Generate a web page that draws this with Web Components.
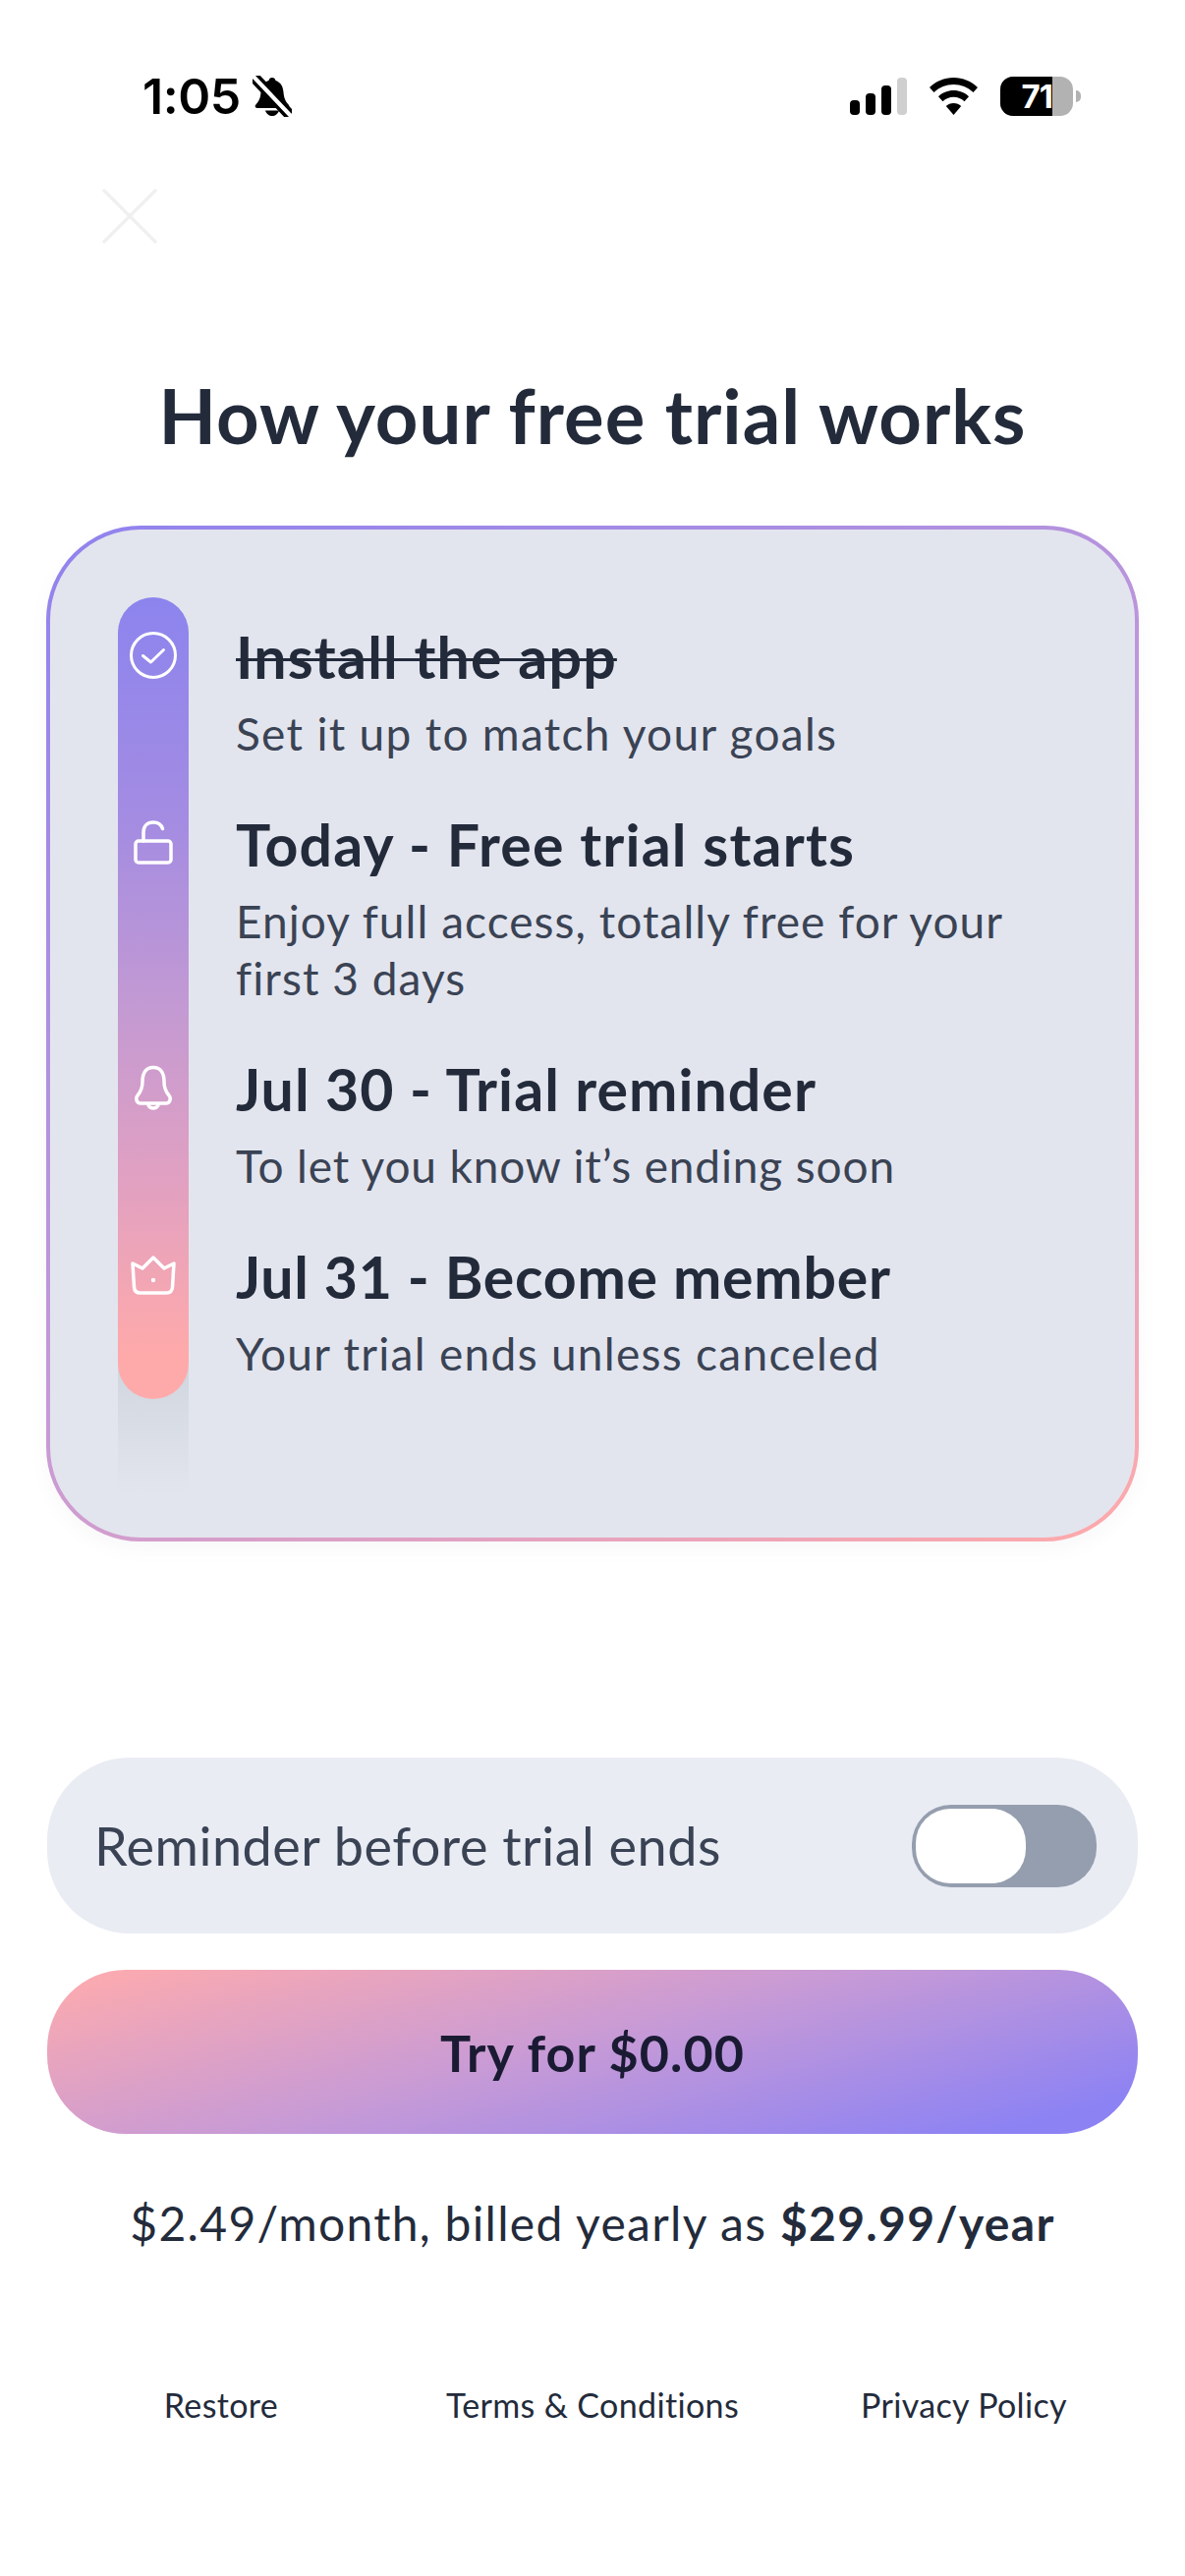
<!DOCTYPE html>
<html lang="en">
<head>
<meta charset="utf-8">
<title>How your free trial works</title>
<style>
  html, body { margin: 0; background: #fff; }
  body { font-family: "Lato", "Noto Sans", sans-serif; color: #232B3B; }
</style>
</head>
<body>
<trial-screen>
  <status-bar slot="status"></status-bar>
  <close-button slot="close"></close-button>
  <span slot="title">How your free trial works</span>
  <trial-timeline slot="card">
    <timeline-row icon="check" done style="--sub-track: 1.3px">
      <span slot="heading">Install the app</span>
      Set it up to match your goals
    </timeline-row>
    <timeline-row icon="lock">
      <span slot="heading">Today - Free trial starts</span>
      Enjoy full access, totally free for your<br>first 3 days
    </timeline-row>
    <timeline-row icon="bell" style="--head-track: 1.05px; --sub-track: 0.85px">
      <span slot="heading">Jul 30 - Trial reminder</span>
      To let you know it’s ending soon
    </timeline-row>
    <timeline-row icon="crown" style="--head-track: 0.75px; --sub-track: 1.3px">
      <span slot="heading">Jul 31 - Become member</span>
      Your trial ends unless canceled
    </timeline-row>
  </trial-timeline>
  <reminder-toggle slot="toggle">Reminder before trial ends</reminder-toggle>
  <cta-button slot="cta">Try for $0.00</cta-button>
  <span slot="price">$2.49/month, billed yearly as <b>$29.99/year</b></span>
  <legal-links slot="legal"></legal-links>
</trial-screen>

<script>
class TrialScreen extends HTMLElement {
  constructor() {
    super();
    this.attachShadow({ mode: 'open' });
    this.shadowRoot.innerHTML = `
      <style>
        :host { display: flex; flex-direction: column; width: 1206px; height: 2622px; background: #fff; overflow: hidden; }
        h1 {
          margin: 130px 0 0;
          text-align: center;
          font-size: 76px;
          line-height: 90px;
          font-weight: 700;
          color: #232B3B;
          letter-spacing: 1px;
        }
        .stack { display: flex; flex-direction: column; padding: 0 47px; }
        .card { margin-top: 67px; }
        .toggle { margin: 220px 1px 0; }
        .cta { margin: 37px 1px 0; }
        .price {
          margin-top: 61px;
          text-align: center;
          font-size: 48px;
          line-height: 60px;
          letter-spacing: 1.3px;
          color: #232B3B;
        }
        .legal { margin-top: 133px; }
      </style>
      <slot name="status"></slot>
      <slot name="close"></slot>
      <h1><slot name="title"></slot></h1>
      <div class="stack">
        <div class="card"><slot name="card"></slot></div>
        <div class="toggle"><slot name="toggle"></slot></div>
        <div class="cta"><slot name="cta"></slot></div>
      </div>
      <div class="price"><slot name="price"></slot></div>
      <div class="legal"><slot name="legal"></slot></div>
    `;
  }
}

class StatusBar extends HTMLElement {
  constructor() {
    super();
    this.attachShadow({ mode: 'open' });
    this.shadowRoot.innerHTML = `
      <style>
        :host { display: flex; justify-content: space-between; align-items: center; height: 40px; padding: 78px 106px 0 145px; }
        .left, .right { display: flex; align-items: center; }
        .time { font: 600 50px/40px "Inter", sans-serif; color: #000; letter-spacing: -0.4px; }
        .left svg { margin-left: 12px; }
        .right svg { display: block; }
        .wifi { margin-left: 22px; }
        .battery {
          position: relative;
          margin-left: 22px;
          width: 74px;
          height: 40px;
          border-radius: 13px;
          overflow: hidden;
          background: #B2B2B2;
        }
        .fill {
          width: 53px;
          height: 40px;
          background: #000;
          color: #fff;
          font: 700 33px/40px "Inter", sans-serif;
          text-align: right;
          letter-spacing: -1px;
        }
        .nub { width: 5px; height: 12px; margin-left: 3px; background: #B2B2B2; border-radius: 0 6px 6px 0; }
      </style>
      <div class="left">
        <span class="time">1:05</span>
        <svg width="40" height="42" viewBox="0 0 40 42">
          <path d="M20 2c-2 0-3 1-3.500 3C11 7 9 11 8.500 17c-.4 6-2 9-5.500 13-1 1.500 0 3 2 3h30c2 0 3-1.500 2-3-3.500-4-5-7-5.500-13C31 11 29 7 23.500 5 23 3 22 2 20 2z" fill="#000"/>
          <path d="M13 35.500c1 3.500 4 5.500 7 5.500s6-2 7-5.500z" fill="#000"/>
          <path d="M1 1 39 41" stroke="#fff" stroke-width="10"/>
          <path d="M2 2 38 40" stroke="#000" stroke-width="3.500" stroke-linecap="round" transform="translate(2.500 -3)"/>
          <path d="M2 2 38 40" stroke="#000" stroke-width="3.500" stroke-linecap="round" transform="translate(-2.500 3)"/>
        </svg>
      </div>
      <div class="right">
        <svg width="58" height="38" viewBox="0 0 58 38">
          <rect x="0" y="23" width="10" height="15" rx="4" fill="#000"/>
          <rect x="16" y="16" width="10" height="22" rx="4" fill="#000"/>
          <rect x="32" y="8" width="10" height="30" rx="4" fill="#000"/>
          <rect x="48" y="0" width="10" height="38" rx="4" fill="#CFCFCF"/>
        </svg>
        <svg class="wifi" width="51" height="38" viewBox="0 0 51 38">
          <path d="M25.500 0C16 0 7.500 3.700 1 10l4.500 5C11 9.800 18 7 25.500 7s14.500 2.800 20 8l4.500-5C43.500 3.700 35 0 25.500 0z" fill="#000"/>
          <path d="M25.500 13c-6 0-11.500 2.300-15.500 6.200l4.500 5c3-2.800 6.800-4.400 11-4.400s8 1.600 11 4.400l4.500-5C37 15.300 31.500 13 25.500 13z" fill="#000"/>
          <path d="M25.500 26c-3 0-5.700 1.100-7.700 3l7.700 9 7.700-9c-2-1.900-4.700-3-7.700-3z" fill="#000"/>
        </svg>
        <div class="battery"><div class="fill">71</div></div>
        <div class="nub"></div>
      </div>
    `;
  }
}

class CloseButton extends HTMLElement {
  constructor() {
    super();
    this.attachShadow({ mode: 'open' });
    this.shadowRoot.innerHTML = `
      <style>
        :host { display: block; width: 56px; height: 56px; margin: 74px 0 0 104px; }
        svg { display: block; }
      </style>
      <svg width="56" height="56" viewBox="0 0 56 56">
        <path d="M2 2 54 54M54 2 2 54" stroke="#F0F0F0" stroke-width="3.500" stroke-linecap="round"/>
      </svg>
    `;
  }
}

class TrialTimeline extends HTMLElement {
  constructor() {
    super();
    this.attachShadow({ mode: 'open' });
    this.shadowRoot.innerHTML = `
      <style>
        :host {
          display: block;
          box-sizing: border-box;
          height: 1034px;
          padding: 69px 0 0 69px;
          border: 4px solid transparent;
          border-radius: 96px;
          background:
            linear-gradient(#E3E5EE, #E3E5EE) padding-box,
            linear-gradient(150deg, #8F82EE 0%, #C79AD6 55%, #FFAAAA 100%) border-box;
          box-shadow: 0 8px 18px rgba(120, 125, 160, 0.05);
        }
        .rows { display: flex; flex-direction: column; gap: 50px; padding-top: 27px; position: relative; z-index: 1; }
        .track {
          position: absolute;
          width: 72px;
          height: 913px;
          background: linear-gradient(#CBD2DB 0%, #CBD2DB 82%, #E3E5EE 100%);
          border-radius: 36px 36px 0 0;
        }
        .bar {
          height: 816px;
          border-radius: 36px;
          background: linear-gradient(#8C84EE 0%, #A48CE2 28%, #C49AD2 52%, #E0A0C2 72%, #FFAAAA 95%);
        }
      </style>
      <div class="track"><div class="bar"></div></div>
      <div class="rows"><slot></slot></div>
    `;
  }
}

const rowIcons = {
  check: `<circle cx="24" cy="24" r="22.500" fill="none" stroke="#fff" stroke-width="3"/>
          <path d="M13.500 24.500 21.500 31 34.500 18.500" fill="none" stroke="#fff" stroke-width="3" stroke-linecap="round" stroke-linejoin="round"/>`,
  lock: `<rect x="6" y="22" width="36" height="22" rx="3" fill="none" stroke="#fff" stroke-width="3.500"/>
         <path d="M14 22V13C14 7 18 3 24 3c4.500 0 8 2 9.500 6.500" fill="none" stroke="#fff" stroke-width="3.500" stroke-linecap="round"/>`,
  bell: `<path d="M24 3.500C16 3.500 13 10 13 18c0 7-1.500 10-5 14-2.500 3-1 8 3 8h26c4 0 5.500-5 3-8-3.500-4-5-7-5-14 0-8-3-14.500-11-14.500z" fill="none" stroke="#fff" stroke-width="3.500" stroke-linejoin="round"/>
         <path d="M19 42c1 2 3 3 5 3s4-1 5-3" fill="none" stroke="#fff" stroke-width="3.500" stroke-linecap="round"/>`,
  crown: `<path d="M3 12 13 17 24 6 35 17 45 12 43.500 36c-.3 4-2.500 6-6 6h-27c-3.500 0-5.700-2-6-6z" fill="none" stroke="#fff" stroke-width="3.500" stroke-linejoin="round"/>
          <circle cx="24" cy="29" r="2.200" fill="#fff"/>`
};

class TimelineRow extends HTMLElement {
  constructor() {
    super();
    this.attachShadow({ mode: 'open' });
  }

  connectedCallback() {
    const done = this.hasAttribute('done');
    this.shadowRoot.innerHTML = `
      <style>
        :host { display: grid; grid-template-columns: 72px 1fr; column-gap: 48px; }
        .icon { display: flex; justify-content: center; align-items: center; height: 64px; }
        svg { display: block; }
        h3 {
          margin: 0;
          font-size: 59px;
          line-height: 68px;
          font-weight: 700;
          color: #232B3B;
          letter-spacing: var(--head-track, 1.2px);
          ${done ? 'text-decoration: line-through; text-decoration-thickness: 3px;' : ''}
        }
        p {
          margin: 15px 0 0;
          font-size: 46px;
          line-height: 58px;
          letter-spacing: var(--sub-track, 1.05px);
          color: #3A4354;
        }
      </style>
      <div class="icon"><svg width="48" height="48" viewBox="0 0 48 48">${rowIcons[this.getAttribute('icon')]}</svg></div>
      <div>
        <h3><slot name="heading"></slot></h3>
        <p><slot></slot></p>
      </div>
    `;
  }
}

class ReminderToggle extends HTMLElement {
  constructor() {
    super();
    this.attachShadow({ mode: 'open' });
    this.shadowRoot.innerHTML = `
      <style>
        :host {
          display: flex;
          align-items: center;
          justify-content: space-between;
          height: 179px;
          padding: 0 42px 0 48px;
          border-radius: 84px;
          background: #EAECF4;
          font-size: 54px;
          letter-spacing: 0.5px;
          color: #3A4354;
        }
        .switch {
          box-sizing: border-box;
          width: 188px;
          height: 84px;
          padding: 4px;
          border-radius: 40px;
          background: #959EAE;
        }
        .thumb { width: 112px; height: 76px; border-radius: 35px; background: #fff; }
      </style>
      <span><slot></slot></span>
      <div class="switch"><div class="thumb"></div></div>
    `;
  }
}

class CtaButton extends HTMLElement {
  constructor() {
    super();
    this.attachShadow({ mode: 'open' });
    this.shadowRoot.innerHTML = `
      <style>
        :host {
          display: flex;
          align-items: center;
          justify-content: center;
          height: 167px;
          border-radius: 80px;
          background: linear-gradient(165deg, #FBAAB0 4%, #C79AD6 48%, #8C82F4 92%);
          font-size: 52px;
          font-weight: 700;
          letter-spacing: 1.1px;
          color: #1A1B33;
        }
      </style>
      <slot></slot>
    `;
  }
}

class LegalLinks extends HTMLElement {
  constructor() {
    super();
    this.attachShadow({ mode: 'open' });
    this.shadowRoot.innerHTML = `
      <style>
        :host {
          display: grid;
          grid-template-columns: repeat(3, 378px);
          padding: 0 36px;
          font-size: 34px;
          line-height: 44px;
          letter-spacing: 0.35px;
          text-align: center;
          color: #232B3B;
        }
      </style>
      <span>Restore</span>
      <span>Terms &amp; Conditions</span>
      <span>Privacy Policy</span>
    `;
  }
}

customElements.define('trial-screen', TrialScreen);
customElements.define('status-bar', StatusBar);
customElements.define('close-button', CloseButton);
customElements.define('trial-timeline', TrialTimeline);
customElements.define('timeline-row', TimelineRow);
customElements.define('reminder-toggle', ReminderToggle);
customElements.define('cta-button', CtaButton);
customElements.define('legal-links', LegalLinks);
</script>
</body>
</html>
